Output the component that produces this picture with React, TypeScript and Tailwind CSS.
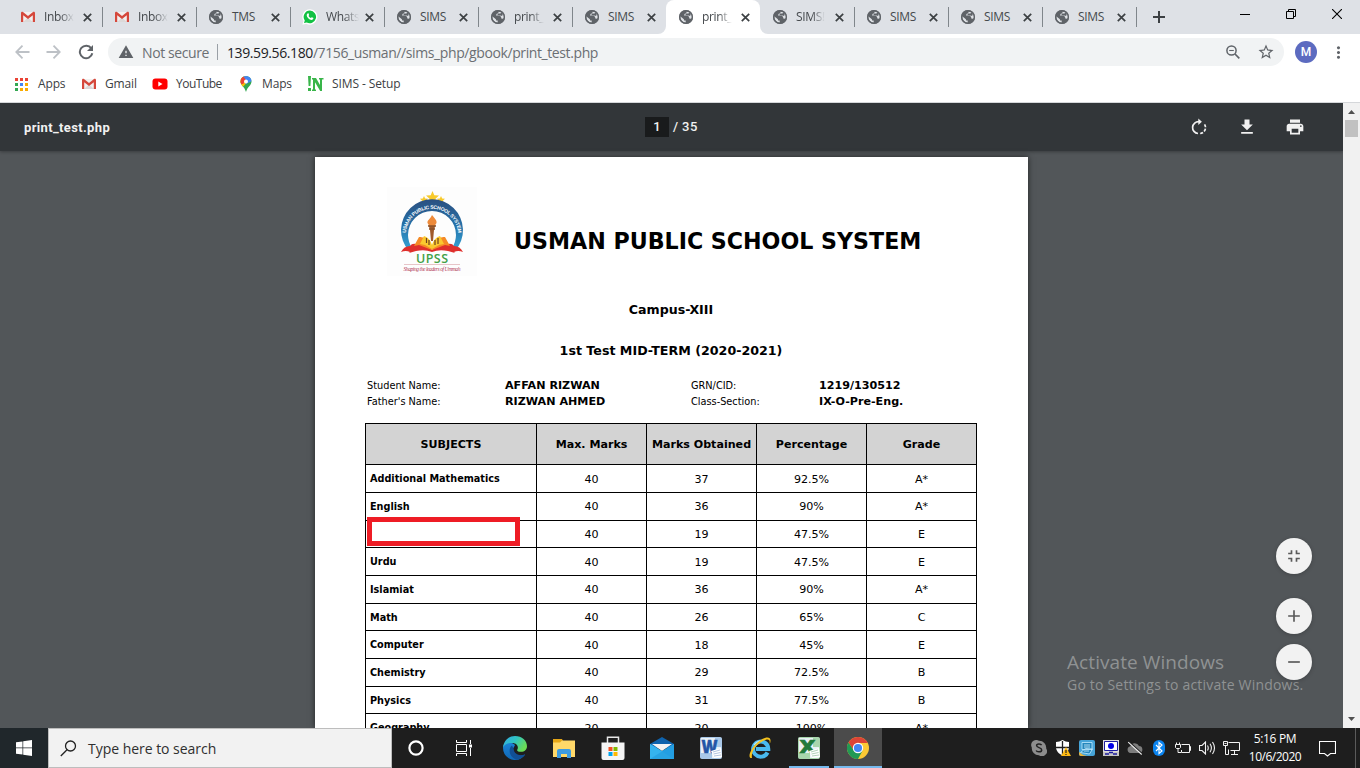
import type { ReactNode } from "react";
import {
  MdAdd,
  MdFileDownload,
  MdFullscreenExit,
  MdPrint,
  MdRemove,
  MdStarBorder,
  MdWarning,
  MdMoreVert,
} from "react-icons/md";

function GmailIcon() {
  return (
    <svg width="16" height="16" viewBox="0 0 16 16">
      <path d="M2 3h12v10H2z" fill="#f3f1f0" />
      <path d="M3 13l5-4.500 5 4.500z" fill="#dcd9d8" />
      <path d="M1 4.200C1 3 2.200 2.500 3 3.100L8 7l5-3.900c.8-.6 2-.1 2 1.100V13h-2.200V6.200L8 9.900 3.200 6.200V13H1z" fill="#d5483c" />
    </svg>
  );
}

function WhatsAppIcon() {
  return (
    <svg width="16" height="16" viewBox="0 0 16 16">
      <path d="M8 .2A7.700 7.700 0 0 0 1.500 12L.4 15.800l3.900-1A7.700 7.700 0 1 0 8 .2z" fill="#fff" />
      <path d="M8 1.600A6.300 6.300 0 0 0 2.800 11.500L2 14.100l2.700-.7A6.300 6.300 0 1 0 8 1.600z" fill="#12c143" />
      <path d="M5.600 4.400c.5-.3.8-.2 1 .2l.5 1.300c0 .4-.5.7-.6 1 .5 1 1.300 1.700 2.400 2.200.4-.2.6-.8 1-.8l1.500.8c.1 1.100-.8 1.900-1.800 1.900C7.300 10.900 4.700 8.200 4.700 6c0-.7.4-1.300.9-1.600z" fill="#fff" />
    </svg>
  );
}

function Globe() {
  return (
    <svg width="16" height="16" viewBox="0 0 16 16">
      <circle cx="8" cy="8" r="7" fill="#5f6368" />
      <path d="M8.600 2.500l-.3 1.700-1.900.9v1.700h3.500l1.200 1.300.2 1.400 1.700.3 1-.6A6 6 0 0 0 10.800 2.700z" fill="#dfe2e6" />
      <path d="M2.200 7.300l3.700 3 .2 1.200h1.600v2.300A6 6 0 0 1 2.200 7.300z" fill="#dfe2e6" />
      <path d="M8.200 4.400l2.300.2.900-1.400 1.500 1.600-.8 2.100-1.600-.4H7z" fill="#5f6368" />
      <circle cx="8" cy="8" r="6.300" fill="none" stroke="#5f6368" strokeWidth="1.400" />
    </svg>
  );
}

type TabInfo = { title: string; icon: "gmail" | "globe" | "whatsapp"; active?: boolean; line?: boolean };

const tabs: TabInfo[] = [
  { title: "Inbox", icon: "gmail", line: true },
  { title: "Inbox", icon: "gmail", line: true },
  { title: "TMS", icon: "globe", line: true },
  { title: "Whats", icon: "whatsapp", line: true },
  { title: "SIMS", icon: "globe", line: true },
  { title: "print_", icon: "globe", line: true },
  { title: "SIMS", icon: "globe" },
  { title: "print_", icon: "globe", active: true },
  { title: "SIMS!", icon: "globe", line: true },
  { title: "SIMS", icon: "globe", line: true },
  { title: "SIMS", icon: "globe", line: true },
  { title: "SIMS", icon: "globe", line: true },
];

function Tab({ tab }: { tab: TabInfo }) {
  return (
    <div className={"relative flex h-[34px] w-[94px] shrink-0 items-center pl-3 " + (tab.active ? "rounded-t-lg bg-white" : "")}>
      {tab.active && (
        <>
          <svg className="absolute -left-2 bottom-0" width="8" height="8">
            <path d="M8 0v8H0a8 8 0 0 0 8-8z" fill="#fff" />
          </svg>
          <svg className="absolute -right-2 bottom-0" width="8" height="8">
            <path d="M0 0v8h8a8 8 0 0 1-8-8z" fill="#fff" />
          </svg>
        </>
      )}
      <span className="flex w-4 justify-center">
        {tab.icon === "gmail" ? <GmailIcon /> : tab.icon === "whatsapp" ? <WhatsAppIcon /> : <Globe />}
      </span>
      <span className="ml-2 w-[31px] whitespace-nowrap text-[12px] tracking-[-0.35px] text-[#45494d]">
        <span className={tab.title === "SIMS" || tab.title === "TMS" ? "" : "[mask-image:linear-gradient(to_right,black_55%,transparent)]"}>
          {tab.title}
        </span>
      </span>
      <svg className="ml-2" width="9" height="9" viewBox="0 0 9 9">
        <path d="M.8.8l7.400 7.400M8.200.8L.8 8.200" stroke="#3c4043" strokeWidth="1.700" />
      </svg>
      {tab.line && <span className="absolute -right-px top-[7px] h-5 w-px bg-[#80868b]" />}
    </div>
  );
}

function TabStrip() {
  return (
    <div className="flex h-[34px] bg-[#dee1e6] pl-2">
      {tabs.map((t, i) => (
        <Tab key={i} tab={t} />
      ))}
      <svg className="ml-[17px] mt-[11px]" width="12" height="12" viewBox="0 0 12 12">
        <path d="M6 0v12M0 6h12" stroke="#3c4043" strokeWidth="2" />
      </svg>
      <div className="ml-auto flex gap-9 pr-[18px] pt-[9px]">
        <svg width="10" height="10">
          <path d="M0 5.500h10" stroke="#000" />
        </svg>
        <svg width="10" height="10" fill="none" stroke="#000">
          <path d="M.5 2.500h7v7h-7zM2.500 2.500v-2h7v7h-2" />
        </svg>
        <svg width="10" height="10">
          <path d="M0 0l10 10M10 0L0 10" stroke="#000" strokeWidth="1.100" />
        </svg>
      </div>
    </div>
  );
}

function AddressBar() {
  return (
    <div className="flex h-9 items-center bg-white">
      <svg className="ml-[15px]" width="15" height="14" viewBox="0 0 15 14" fill="none" stroke="#bdc1c6" strokeWidth="1.800">
        <path d="M14.500 7H1.500M7.500.7L1.300 7l6.200 6.300" />
      </svg>
      <svg className="ml-4" width="15" height="14" viewBox="0 0 15 14" fill="none" stroke="#bdc1c6" strokeWidth="1.800">
        <path d="M.5 7h13M7.500.7L13.700 7l-6.200 6.300" />
      </svg>
      <svg className="ml-[17px]" width="16" height="16" viewBox="0 0 16 16">
        <path d="M13.300 4.300A6.300 6.300 0 1 0 14.300 9.300" fill="none" stroke="#5f6368" strokeWidth="2" />
        <path d="M15 1v6H9z" fill="#5f6368" />
      </svg>
      <div className="ml-[14px] flex h-7 w-[1176px] items-center rounded-full bg-[#f1f3f4] pl-2.5 text-[14px]">
        <MdWarning size={16} color="#5f6368" />
        <span className="ml-2 w-[68px] whitespace-nowrap tracking-[-0.4px] text-[#6b6f73]">Not secure</span>
        <span className="ml-[7px] h-4 w-px bg-[#9aa0a6]" />
        <span className="ml-[9px] whitespace-nowrap tracking-[-0.4px] text-[#6b6f73]">
          <span className="text-[#202124]">139.59.56.180</span>/7156_usman//sims_php/gbook/print_test.php
        </span>
        <svg className="ml-auto" width="14" height="14" viewBox="0 0 14 14" fill="none" stroke="#5f6368">
          <circle cx="5.500" cy="5.500" r="4.600" strokeWidth="1.500" />
          <path d="M9 9l4.300 4.300" strokeWidth="1.700" />
          <path d="M3.200 5.500h4.600" strokeWidth="1.100" />
        </svg>
        <MdStarBorder className="ml-[17px] mr-[9px]" size={18} color="#5f6368" />
      </div>
      <div className="ml-[11px] flex size-[22px] items-center justify-center rounded-full bg-[#5c6bc0] font-['Roboto'] text-[12px] font-medium text-white">
        M
      </div>
      <MdMoreVert className="ml-[12px]" size={19} color="#5f6368" />
    </div>
  );
}

const appDots = ["#ea4335", "#ea4335", "#ea4335", "#34a853", "#4285f4", "#f9ab00", "#34a853", "#f9ab00", "#f9ab00"];

function BookmarksBar() {
  return (
    <div className="flex h-[33px] items-center border-b border-[#d5d7da] bg-white pb-1 pl-[15px] text-[12px] tracking-[-0.15px] text-[#3c4043]">
      <div className="grid grid-cols-3 gap-[2px]">
        {appDots.map((c, i) => (
          <span key={i} className="size-[3px]" style={{ background: c }} />
        ))}
      </div>
      <span className="ml-[10px] w-[27px] whitespace-nowrap">Apps</span>
      <span className="ml-4"><GmailIcon /></span>
      <span className="ml-2 w-[31px] whitespace-nowrap">Gmail</span>
      <svg className="ml-4" width="16" height="12" viewBox="0 0 16 12">
        <rect x=".5" y=".5" width="15" height="11" rx="3" fill="#f00" />
        <path d="M6.300 3.500v5L10.500 6z" fill="#fff" />
      </svg>
      <span className="ml-2 w-[46px] whitespace-nowrap tracking-[-0.5px]">YouTube</span>
      <svg className="ml-[16px]" width="16" height="16" viewBox="0 0 16 16">
        <defs>
          <clipPath id="pin">
            <path d="M8 0a5.500 5.500 0 0 0-5.500 5.500C2.500 9.500 6.500 10.500 8 16c1.500-5.500 5.500-6.500 5.500-10.500A5.500 5.500 0 0 0 8 0z" />
          </clipPath>
        </defs>
        <g clipPath="url(#pin)">
          <path d="M0 0h16v16H0z" fill="#34a853" />
          <path d="M0 0h8L11 4 4 12H0z" fill="#fbbc04" />
          <path d="M5 0h11v4L8 8 5 4z" fill="#4285f4" />
          <path d="M0 0h5l3 4-3 4H0z" fill="#ea4335" />
        </g>
        <circle cx="8" cy="5.500" r="2" fill="#fff" />
      </svg>
      <span className="ml-2 w-[30px] whitespace-nowrap">Maps</span>
      <svg className="ml-[15px]" width="17" height="16" viewBox="0 0 17 16" fill="#39b54a">
        <path d="M1 0h3l-.6 10H1.600zM1 12h3v3H1zM5 2h4l4 7V3.500h-1V2h4.500v1.500H15V15h-1.800L8 6.200v7.300h1V15H5v-1.500h1V3.500H5z" />
      </svg>
      <span className="ml-2 whitespace-nowrap tracking-[-0.1px]">SIMS - Setup</span>
    </div>
  );
}

function SchoolLogo() {
  return (
    <svg className="shrink-0" width="90" height="89" viewBox="0 0 90 89">
      <defs>
        <path id="arc" d="M18.800 48A26.200 26.200 0 0 1 71.200 48" />
        <linearGradient id="ring" x1="0" y1="0" x2="0" y2="1">
          <stop offset="0" stopColor="#2b4f80" />
          <stop offset=".5" stopColor="#2671a8" />
          <stop offset="1" stopColor="#35a6d8" />
        </linearGradient>
      </defs>
      <rect width="90" height="89" fill="#fdfdfd" />
      <g fill="#f8ca2c">
        <path d="M45.500 4l1.800 4.200 4.700.4-3.500 3.100 1 4.600-4-2.400-4 2.400 1-4.600L39 8.600l4.700-.4z" />
        <path d="M37 9l1.200 2.500 2.800.3-2.100 2 .6 2.700-2.500-1.400-2.500 1.400.6-2.700-2.100-2 2.800-.3zM54 9l1.200 2.500 2.800.3-2.100 2 .6 2.700-2.500-1.400-2.500 1.400.6-2.700-2.100-2 2.800-.3z" />
      </g>
      <path d="M22 64A31 31 0 1 1 68 64L65 61A25 25 0 0 0 69 48A24 24 0 0 0 21 48A25 25 0 0 0 25 61z" fill="url(#ring)" />
      <text fill="#fff" fontSize="5" fontWeight="700" fontFamily="Liberation Sans, sans-serif" letterSpacing="-0.22">
        <textPath href="#arc" startOffset="50%" textAnchor="middle">USMAN PUBLIC SCHOOL SYSTEM</textPath>
      </text>
      <path d="M14 65q3-6 9-6 2-3 6-2 8-1 16 6 8-7 16-6 4-1 6 2 6 0 9 6-5-2-9 0l1 1-7-2q-9-2-16 1-7-3-16-1l-7 2 1-1q-4-2-9 0z" fill="#df2f2c" />
      <path d="M27 59l5-9q9-1 13 10 4-11 13-10l5 9-5-1-13 5-13-5z" fill="#f58a25" />
      <path d="M33 57l4-8q6 2 8 9 2-7 8-9l4 8-5 1-7 4-7-4z" fill="#fac92f" />
      <path d="M39.500 51v5M42 53v5M48 53v5M51 51v6" stroke="#72411d" strokeWidth="1.200" />
      <path d="M41.500 38h7l-1.500 5-1 11h-2l-1-11z" fill="#a05a2b" />
      <path d="M45 28c3 4 5 5 4.500 8l-2 3h-5l-2-3c-.5-3 3-4 4.500-8z" fill="#ed8a3a" />
      <path d="M41 39h8M42 42h6" stroke="#8a5128" strokeWidth="1.300" />
      <text x="45" y="75.500" textAnchor="middle" textLength="32" fill="#43a047" fontSize="12.500" fontWeight="600" fontFamily="Open Sans, sans-serif">UPSS</text>
      <path d="M17 77.500h56" stroke="#d9a0a4" strokeWidth=".6" />
      <text x="45" y="83.500" textAnchor="middle" textLength="57" fill="#b33b58" fontSize="5.600" fontStyle="italic" fontFamily="Liberation Serif, serif">Shaping the leaders of Ummah</text>
    </svg>
  );
}

const rows = [
  ["Additional Mathematics", "40", "37", "92.5%", "A*"],
  ["English", "40", "36", "90%", "A*"],
  ["", "40", "19", "47.5%", "E"],
  ["Urdu", "40", "19", "47.5%", "E"],
  ["Islamiat", "40", "36", "90%", "A*"],
  ["Math", "40", "26", "65%", "C"],
  ["Computer", "40", "18", "45%", "E"],
  ["Chemistry", "40", "29", "72.5%", "B"],
  ["Physics", "40", "31", "77.5%", "B"],
  ["Geography", "20", "20", "100%", "A*"],
];

function MarksTable() {
  return (
    <div className="ml-[50px] mt-[13px] w-[612px] border-l border-t border-black">
      <div className="grid h-[41px] grid-cols-[171px_110px_110px_110px_110px] bg-[#d3d3d3] text-[11.1px] font-bold">
        {["SUBJECTS", "Max. Marks", "Marks Obtained", "Percentage", "Grade"].map((h) => (
          <div key={h} className="flex items-center justify-center whitespace-nowrap border-b border-r border-black pt-0.5">
            {h}
          </div>
        ))}
      </div>
      {rows.map((r, i) => (
        <div
          key={i}
          className={"relative grid grid-cols-[171px_110px_110px_110px_110px] text-[11.1px] " + (i % 3 === 2 ? "h-[27px]" : "h-7")}
        >
          {r.map((c, j) => (
            <div
              key={j}
              className={
                "flex items-center border-b border-r border-black whitespace-nowrap " +
                (j === 0 ? "pl-1 pt-0.5 text-[9.7px] font-bold" : i === 1 || i === 4 || i === 7 ? "justify-center pt-px" : "justify-center pt-[3px]")
              }
            >
              {c}
            </div>
          ))}
          {i === 2 && <div className="absolute left-[1px] -top-[4px] h-[29px] w-[153px] border-[5px] border-[#ee1c25] bg-white" />}
        </div>
      ))}
    </div>
  );
}

function Sheet() {
  return (
    <div className="ml-[315px] mt-1.5 h-[571px] w-[713px] overflow-hidden bg-white font-['DejaVu_Sans'] text-black shadow-[0_0_6px_rgba(0,0,0,0.6)]">
      <div className="flex h-[119px] pl-[72px] pt-[30px]">
        <SchoolLogo />
        <h1 className="ml-[37px] mt-[38px] whitespace-nowrap text-[22.16px] font-bold leading-[32px]">USMAN PUBLIC SCHOOL SYSTEM</h1>
      </div>
      <div className="flex h-[67px] items-center justify-center pr-px pt-0.5 text-[12.6px] font-bold">Campus-XIII</div>
      <div className="flex h-[15px] items-center justify-center pr-px pt-0.5 text-[12.65px] font-bold">1st Test MID-TERM (2020-2021)</div>
      <div className="mt-[20px] grid grid-cols-[138px_186px_128px_1fr] pl-[52px] text-[9.75px] leading-4">
        <span>Student Name:</span>
        <b className="text-[11.15px]">AFFAN RIZWAN</b>
        <span>GRN/CID:</span>
        <b className="text-[11.15px]">1219/130512</b>
        <span>Father's Name:</span>
        <b className="text-[11.15px]">RIZWAN AHMED</b>
        <span>Class-Section:</span>
        <b className="text-[11.15px]">IX-O-Pre-Eng.</b>
      </div>
      <MarksTable />
    </div>
  );
}

function RoundButton({ children, className }: { children: ReactNode; className: string }) {
  return (
    <div className={"flex size-9 items-center justify-center rounded-full bg-[#f2f2f2] text-[#5a5a5a] shadow-[0_1px_4px_rgba(0,0,0,0.2)] " + className}>
      {children}
    </div>
  );
}

function PdfViewer() {
  return (
    <div className="flex h-[625px]">
      <div className="relative w-[1343px] overflow-hidden bg-[#525659]">
        <div className="flex h-12 items-center bg-[#323639] font-['Roboto'] text-[13px] font-medium text-[#f1f1f1] shadow-[0_1px_3px_rgba(0,0,0,0.3)]">
          <span className="w-[621px] pl-6 pt-px font-bold tracking-[0.35px]">print_test.php</span>
          <span className="ml-6 flex h-5 w-6 items-center justify-center bg-[#191b1c]">1</span>
          <span className="ml-1 whitespace-pre tracking-[0.4px]">/ 35</span>
          <div className="ml-auto flex gap-[30px] pr-[39px]">
            <svg width="18" height="18" viewBox="0 0 18 18" fill="none" stroke="#f1f1f1" strokeWidth="1.700">
              <path d="M8 15.500A5.900 5.900 0 0 1 9 3.700h1" />
              <path d="M10.200 15.500a5.900 5.900 0 0 0 4.300-9.200" strokeDasharray="3 1.500" />
              <path d="M8.300.5v6.400l3.600-3.200z" fill="#f1f1f1" stroke="none" />
            </svg>
            <MdFileDownload size={20} className="-mx-px -mt-px" />
            <MdPrint size={20} className="-mx-px -mt-px" />
          </div>
        </div>
        <Sheet />
        <div className="absolute left-[1067px] top-[547px] whitespace-nowrap text-[#8f9293]">
          <div className="text-[19px] leading-[25px] tracking-[0.08px]">Activate Windows</div>
          <div className="text-[14px] leading-5 tracking-[0.2px]">Go to Settings to activate Windows.</div>
        </div>
        <div className="absolute right-[31px] top-[435px]">
          <RoundButton className=""><MdFullscreenExit size={20} /></RoundButton>
          <RoundButton className="mt-6"><MdAdd size={20} /></RoundButton>
          <RoundButton className="mt-2.5"><MdRemove size={20} /></RoundButton>
        </div>
      </div>
      <div className="flex w-[17px] flex-col items-center bg-[#f1f1f1]">
        <svg width="17" height="17">
          <path d="M5 11l3.500-4 3.500 4z" fill="#505050" />
        </svg>
        <div className="h-[17px] w-[13px] bg-[#c1c1c1]" />
        <svg className="mt-auto" width="17" height="17">
          <path d="M5 6h7l-3.500 4z" fill="#505050" />
        </svg>
      </div>
    </div>
  );
}

function EdgeIcon() {
  return (
    <svg width="24" height="24" viewBox="0 0 24 24">
      <defs>
        <linearGradient id="e1" x1="0" y1="0" x2="1" y2=".5">
          <stop offset="0" stopColor="#35a9e8" />
          <stop offset=".5" stopColor="#2fc4c4" />
          <stop offset="1" stopColor="#6bdc55" />
        </linearGradient>
        <linearGradient id="e2" x1="0" y1="0" x2="0" y2="1">
          <stop offset="0" stopColor="#1b83d8" />
          <stop offset="1" stopColor="#1067b3" />
        </linearGradient>
      </defs>
      <path d="M0 12a12 12 0 0 0 17.500 10.700c2-1 3.500-2.500 4.500-4.200-5 2.500-12 1-12-5.500L12 9C8 5 0 7 0 12z" fill="url(#e2)" />
      <path d="M9 9.500C4.500 13 6.500 22 14 23.700c3.500-.5 6.500-2.700 8.200-5.500-5 2.500-11.200 0-11.500-5z" fill="#114f94" />
      <path d="M0 11.500C.8 4.500 6 0 12 0c7 0 12 4.800 12 10.200 0 3.300-2.500 5.600-5.800 5.600-3 0-4.500-1-4-2 1.600-2.300.5-6.800-5.200-6.800C4.500 7 1.500 8.500 0 11.500z" fill="url(#e1)" />
    </svg>
  );
}

function FolderIcon() {
  return (
    <svg width="22" height="19" viewBox="0 0 22 19">
      <path d="M0 0h9l1 2h12v4H0z" fill="#e5a617" />
      <path d="M0 3.500h7L9 1.500h13V18H0z" fill="#ffd869" />
      <path d="M4 19v-7q0-2 2-2h10q2 0 2 2v7h-4v-4H8v4z" fill="#3d9be0" />
    </svg>
  );
}

function StoreIcon() {
  return (
    <svg width="24" height="24" viewBox="0 0 24 24">
      <path d="M6.500 7V1.200h11V7" fill="none" stroke="#e8e8e8" strokeWidth="1.500" />
      <path d="M.5 6.500h23V22q0 2-2 2h-19q-2 0-2-2z" fill="#f5f5f5" />
      <path d="M7.500 11h4v4h-4z" fill="#f25022" />
      <path d="M12.500 11h4v4h-4z" fill="#7fba00" />
      <path d="M7.500 16h4v4h-4z" fill="#00a4ef" />
      <path d="M12.500 16h4v4h-4z" fill="#ffb900" />
    </svg>
  );
}

function MailIcon() {
  return (
    <svg width="24" height="22" viewBox="0 0 24 22">
      <path d="M0 7l12-7 12 7v4H0z" fill="#0f63ad" />
      <path d="M2 7h20L12 14z" fill="#f4f4f4" />
      <path d="M0 7l12 7 12-7v15H0z" fill="#29a8ea" />
      <path d="M0 22V7l24 15z" fill="#35b3ee" />
      <path d="M24 7v15H0z" fill="#1f97dc" opacity=".6" />
    </svg>
  );
}

function OfficeIcon({ letter, color, bg }: { letter: string; color: string; bg: string }) {
  return (
    <svg width="22" height="22" viewBox="0 0 22 22">
      <rect x=".5" y=".5" width="21" height="21" rx="1" fill="#eaf1f6" stroke={bg} />
      <path d="M15 1h6v9h-6zM1 16h11v5H1z" fill={bg} />
      <text x="9.500" y="16" textAnchor="middle" fontSize="17" fontWeight="800" fontFamily="Open Sans, sans-serif" fill={color} stroke={color} strokeWidth=".5" textLength="16" lengthAdjust="spacingAndGlyphs">
        {letter}
      </text>
      <path d="M11 14l10-3 1 9-8 1z" fill="#fff" />
      <path d="M13 15l7-2M13.500 17l7-1.500M14 19l7-1" stroke={color} strokeWidth=".7" opacity=".5" />
    </svg>
  );
}

function IeIcon() {
  return (
    <svg width="24" height="24" viewBox="0 0 24 24">
      <path d="M19.500 16.500A7.600 7.600 0 1 1 20.300 13H8" fill="none" stroke="#49b9ee" strokeWidth="4" />
      <path d="M6 9q3-4.500 8-4.200" stroke="#b4e8fb" strokeWidth="1.300" fill="none" />
      <path d="M4 22C-1 23 2 13 9 7 15 1 23-1 22.500 5c0 1-.3 2-.8 3 .3-3-.2-5-3.700-4.200C10 6 2.500 15 4 22z" fill="#f6c21d" />
    </svg>
  );
}

function ChromeIcon() {
  return (
    <svg width="22" height="22" viewBox="0 0 22 22">
      <circle cx="11" cy="11" r="11" fill="#fcc934" />
      <path d="M1.470 5.500A11 11 0 0 1 20.530 5.500L20.500 6H11L6.700 13.500z" fill="#dc4437" />
      <path d="M1.470 5.500A11 11 0 0 0 11 22l4.500-8.200H7z" fill="#229954" />
      <circle cx="11" cy="11" r="5.200" fill="#fff" />
      <circle cx="11" cy="11" r="4.100" fill="#4486f4" />
    </svg>
  );
}

function TaskButton({ children, running, active }: { children: ReactNode; running?: boolean; active?: boolean }) {
  return (
    <div className={"relative flex h-10 w-12 items-center justify-center " + (active ? "bg-[#4b4b4b]" : "")}>
      {children}
      {running && <span className="absolute inset-x-1 bottom-0 h-0.5 bg-[#76b9ed]" />}
      {active && <span className="absolute inset-x-0 bottom-0 h-0.5 bg-[#76b9ed]" />}
    </div>
  );
}

function Tray() {
  return (
    <div className="ml-auto flex items-center">
      <div className="grid grid-cols-[repeat(9,24px)] items-center justify-items-center">
        <svg width="16" height="16" viewBox="0 0 16 16">
          <path d="M5 0a5 5 0 0 1 3 .8A7 7 0 0 1 15.200 8.500 5 5 0 0 1 8 15.200 7 7 0 0 1 .8 7.500 5 5 0 0 1 5 0z" fill="#8d8d8d" />
          <path d="M10.600 5.200C9.800 3.600 5.600 3.500 5.600 5.600c0 2.400 5.100 1.600 5.100 4.300 0 2.500-4.800 2.400-5.500.6" fill="none" stroke="#222" strokeWidth="1.500" />
        </svg>
        <svg width="16" height="16" viewBox="0 0 16 16">
          <path d="M7.500 0q3 2 6.500 2v5c0 4-3 7-6.500 8.500C4 14 1 11 1 7V2q3.500 0 6.500-2z" fill="#fff" />
          <path d="M7.500 1v14M1 7.500h13" stroke="#1f1f1f" strokeWidth="1.300" />
          <path d="M11 7l5 9H6z" fill="#fdb913" />
          <path d="M11 10v3M11 14v1" stroke="#222" strokeWidth="1.200" />
        </svg>
        <svg width="16" height="16" viewBox="0 0 16 16">
          <rect width="16" height="16" rx="2" fill="#46a4d8" />
          <path d="M3 2.500h10v7H3zM1.500 12.500l5-4 7 .5-3 5z" fill="#2387bd" stroke="#c3ecff" strokeWidth=".8" />
          <path d="M5 5h6M5 7h6M5 11h5" stroke="#d4f3ff" strokeWidth=".8" />
          <path d="M0 12q3 3 8 4H2q-2 0-2-2z" fill="#e6b23b" />
        </svg>
        <svg width="16" height="16" viewBox="0 0 16 16">
          <path d="M0 0h16v12H0z" fill="#ddd" />
          <path d="M1.500 1.500h13v9h-13z" fill="#fff" stroke="#1c1c9e" />
          <circle cx="8" cy="6" r="3" fill="#0000e8" />
          <path d="M0 12h16v4H0z" fill="#c5c5c5" />
          <path d="M2 14h4M10 14h4M6 12.500h4" stroke="#1c1c9e" strokeWidth="1.500" />
        </svg>
        <svg width="16" height="14" viewBox="0 0 16 14">
          <path d="M3.500 12a3.400 3.400 0 0 1-.2-6.700 4.700 4.700 0 0 1 8.700-.2A3.500 3.500 0 0 1 12.700 12z" fill="#7d7d7d" />
          <path d="M2.200.8l13 12" stroke="#1f1f1f" strokeWidth="1.200" />
          <path d="M1.200 1.200l13.500 12.300" stroke="#eee" strokeWidth="1.100" />
        </svg>
        <svg width="12" height="16" viewBox="0 0 12 16">
          <rect width="12" height="16" rx="6" fill="#0a84f0" />
          <path d="M3 5l6 6-3 2.500v-11L9 5l-6 6" fill="none" stroke="#fff" strokeWidth="1.100" />
        </svg>
        <svg width="16" height="12" viewBox="0 0 16 12" fill="none" stroke="#f2f2f2">
          <path d="M6.500 2.500h8v8h-8V8M14.500 4.500h1v4h-1" />
          <path d="M1.500.5v2M4.500.5v2M.5 2.500h5v3l-1 1h-3l-1-1zM3 6.500v4h3" />
        </svg>
        <svg width="17" height="14" viewBox="0 0 17 14" fill="none" stroke="#f2f2f2" strokeWidth="1.100">
          <path d="M.5 4.500H3l3.500-3.500v12L3 9.500H.5z" />
          <path d="M8.500 4.500q1.500 2.500 0 5M11 2.800q2.800 4.200 0 8.400M13.500 1q4 6 0 12" />
        </svg>
        <svg width="17" height="14" viewBox="0 0 17 14" fill="none" stroke="#f2f2f2">
          <path d="M5.500 1.500h11v8h-9M11.500 9.500v4M8 13.500h7" />
          <path d="M.5.500h4v4h-4zM2.500 4.500v9h3v-5M1.500 2.500h2" />
        </svg>
      </div>
      <div className="ml-[5px] w-[54px] whitespace-nowrap pb-px text-center text-[12px] leading-[18px] tracking-[-0.5px] text-white">
        <div className="flex justify-center tracking-[-0.35px]">5:16 PM</div>
        <div className="flex justify-center">10/6/2020</div>
      </div>
      <svg className="ml-[17px] mr-[19px]" width="17" height="17" viewBox="0 0 17 17" fill="none" stroke="#fff">
        <path d="M.5 1.500h16v12h-5l-3 2.500-3-2.500h-5z" strokeWidth="1.100" />
      </svg>
      <span className="mr-1 h-10 w-px bg-[#5b5b5b]" />
    </div>
  );
}

function Taskbar() {
  return (
    <div className="flex h-10 bg-[#1e1e1e]">
      <div className="flex w-12 items-center justify-center bg-[#20272b]">
        <svg width="16" height="16" viewBox="0 0 16 16" fill="#fff">
          <path d="M0 2.300L6.500 1.400v6.200H0zM7.200 1.300L16 0v7.600H7.200zM0 8.300h6.500v6.300L0 13.700zM7.200 8.300H16V16l-8.800-1.300z" />
        </svg>
      </div>
      <div className="flex w-[344px] items-center border border-[#bdbdbd] bg-[#f2f2f2] pl-[11px]">
        <svg width="17" height="17" viewBox="0 0 17 17" fill="none" stroke="#222" strokeWidth="1.300">
          <circle cx="10.500" cy="6" r="5" />
          <path d="M7 9.700L.8 16" />
        </svg>
        <span className="ml-[11px] whitespace-nowrap text-[14px] tracking-[-0.03px] text-[#2f2f2f]">Type here to search</span>
      </div>
      <TaskButton>
        <svg width="16" height="16" viewBox="0 0 16 16">
          <circle cx="8" cy="8" r="6.600" fill="none" stroke="#fff" strokeWidth="2.200" />
        </svg>
      </TaskButton>
      <TaskButton>
        <svg width="16" height="16" viewBox="0 0 16 16" fill="none" stroke="#fff">
          <path d="M.5 0v2.500h10V0M.5 16v-2.500h10V16M.5 4.500h10v7H.5zM14.500 0v4M14.500 8v8" />
          <path d="M13 4.500h3v3h-3z" fill="#fff" stroke="none" />
        </svg>
      </TaskButton>
      <div className="ml-[3px] flex gap-px">
        <TaskButton><EdgeIcon /></TaskButton>
        <TaskButton><FolderIcon /></TaskButton>
        <TaskButton><StoreIcon /></TaskButton>
        <TaskButton><MailIcon /></TaskButton>
        <TaskButton><OfficeIcon letter="W" color="#2456a6" bg="#a9c8e8" /></TaskButton>
        <TaskButton><IeIcon /></TaskButton>
        <TaskButton running><OfficeIcon letter="X" color="#217b3b" bg="#a8d6ad" /></TaskButton>
        <TaskButton active><ChromeIcon /></TaskButton>
      </div>
      <Tray />
    </div>
  );
}

export default function App() {
  return (
    <div className="h-[768px] w-[1360px] overflow-hidden bg-white font-['Open_Sans','Noto_Sans',sans-serif]">
      <TabStrip />
      <AddressBar />
      <BookmarksBar />
      <PdfViewer />
      <Taskbar />
    </div>
  );
}
